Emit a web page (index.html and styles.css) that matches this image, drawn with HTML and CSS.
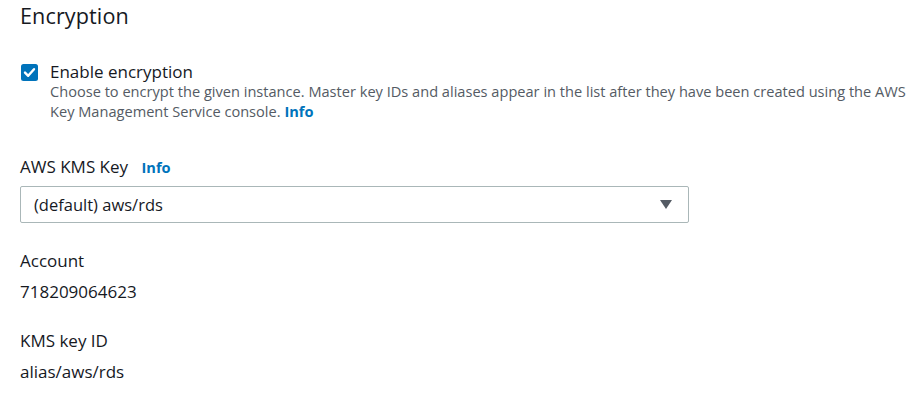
FILE: index.html
```html
<!DOCTYPE html>
<html>
<head>
<meta charset="utf-8">
<link rel="stylesheet" href="styles.css">
</head>
<body>
<div class="page">
  <h2 class="title">Encryption</h2>
  <div class="check-row">
    <span class="checkbox">
      <svg width="17" height="17" viewBox="0 0 17 17"><rect x="0" y="0" width="17" height="17" rx="2.5" fill="#0073bb"/><path d="M4 8.6 L7.2 11.8 L13 5.2" fill="none" stroke="#fff" stroke-width="2.4" stroke-linecap="round" stroke-linejoin="round"/></svg>
    </span>
    <div class="check-text">
      <div class="check-label">Enable encryption</div>
      <div class="check-desc">Choose to encrypt the given instance. Master key IDs and aliases appear in the list after they have been created using the AWS Key Management Service console. <a class="info" href="#">Info</a></div>
    </div>
  </div>
  <div class="field">
    <div class="field-label">AWS KMS Key <a class="info" href="#">Info</a></div>
    <div class="select">
      <span class="select-value">(default) aws/rds</span>
      <svg class="caret" width="12" height="9" viewBox="0 0 12 9"><path d="M0 0 H12 L6 9 Z" fill="#545b64"/></svg>
    </div>
  </div>
  <div class="kv">
    <div class="kv-label">Account</div>
    <div class="kv-value">718209064623</div>
  </div>
  <div class="kv">
    <div class="kv-label">KMS key ID</div>
    <div class="kv-value">alias/aws/rds</div>
  </div>
</div>
</body>
</html>
```
FILE: styles.css
```css
html, body {
  margin: 0;
  padding: 0;
  background: #ffffff;
}
body {
  font-family: "Open Sans", "Noto Sans", "Liberation Sans", sans-serif;
  color: #16191f;
}
.page {
  padding: 0 0 0 20px;
}
.title {
  margin: 0;
  padding-top: 3px;
  font-size: 21.6px;
  font-weight: 400;
  line-height: 26px;
  letter-spacing: 0.1px;
  color: #16191f;
}
.check-row {
  display: flex;
  gap: 12px;
  margin-top: 32px;
}
.checkbox {
  display: block;
  width: 17px;
  height: 17px;
  margin-top: 3px;
  margin-left: 1px;
}
.checkbox svg { display: block; }
.check-label {
  font-size: 17px;
  line-height: 22px;
}
.check-desc {
  width: 860px;
  margin-top: -2px;
  font-size: 14.6px;
  line-height: 20px;
  color: #545b64;
}
.info {
  color: #0073bb;
  font-weight: 700;
  text-decoration: none;
}
.field {
  margin-top: 35px;
}
.field-label {
  font-size: 17px;
  line-height: 22px;
}
.field-label .info {
  font-size: 14.6px;
  margin-left: 9px;
}
.select {
  box-sizing: border-box;
  width: 669px;
  height: 37px;
  margin-top: 8px;
  border: 1px solid #aab7b8;
  border-radius: 2px;
  display: flex;
  align-items: center;
  justify-content: space-between;
  padding: 0 16px 0 13px;
}
.select-value {
  font-size: 16.5px;
}
.caret { display: block; }
.kv {
  margin-top: 27px;
}
.kv-label, .kv-value {
  font-size: 17px;
  line-height: 22px;
}
.kv-value {
  margin-top: 9px;
}
.kv + .kv {
  margin-top: 27px;
}
```
